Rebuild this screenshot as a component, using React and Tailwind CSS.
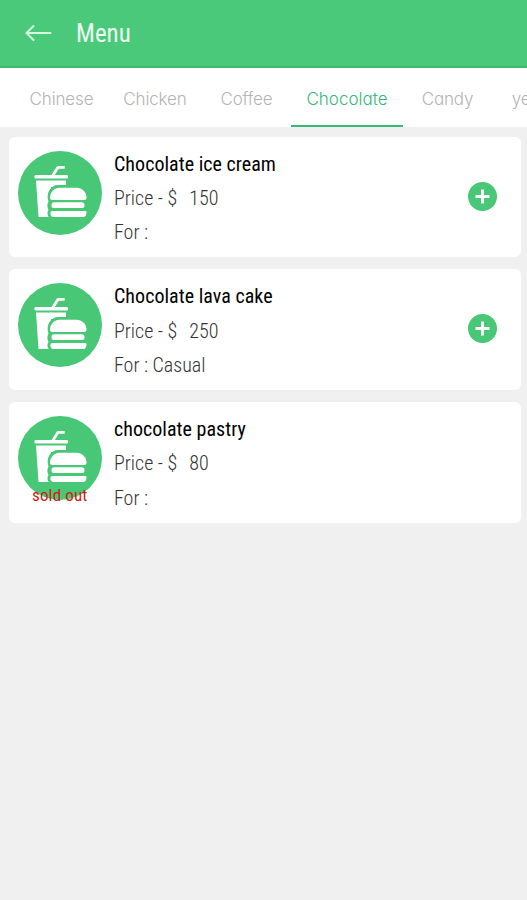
import React from 'react';
import clsx from 'clsx';

const tabs = [
  { name: 'Chinese', width: 'w-[93px]' },
  { name: 'Chicken', width: 'w-[94px]' },
  { name: 'Coffee', width: 'w-[89px]' },
  { name: 'Chocolate', width: 'w-[112px]', active: true },
  { name: 'Candy', width: 'w-[89px]' },
  { name: 'ye', width: 'w-[58px]' },
];

const items = [
  { name: 'Chocolate ice cream', price: 150, category: '' },
  { name: 'Chocolate lava cake', price: 250, category: 'Casual' },
  { name: 'chocolate pastry', price: 80, category: '', soldOut: true },
];

const BackArrow = () => (
  <svg width="28" height="20" viewBox="0 0 28 20" fill="none" stroke="#d6fae0" strokeWidth="2">
    <path d="M26.5 10H2.5M9.5 3L2.5 10L9.5 17" strokeLinecap="round" strokeLinejoin="round" />
  </svg>
);

const FoodIcon = () => (
  <svg width="84" height="84" viewBox="0 0 84 84">
    <circle cx="42" cy="42" r="42" fill="#48c776" />
    <path d="M34.5 25L40 16.3H46.7" fill="none" stroke="#fff" strokeWidth="2.8" strokeLinejoin="round" />
    <rect x="16.5" y="24" width="33.5" height="3.4" rx="1.2" fill="#fff" />
    <path d="M18 29.5H48V36H33V66H20.5Z" fill="#fff" />
    <path
      d="M40 34H60C67 34 71 41 71 47V66.5H31C29 64 29 61 30.5 59C29 56 29 53 30.5 50.5C27.5 42 33 34 40 34Z"
      fill="#48c776"
    />
    <path
      d="M41.5 36.7H58.5C65 36.7 68.5 42 68.5 46.5Q68.5 49 66 49H34.5Q32 49 32 46.5C32 42 35.5 36.7 41.5 36.7Z"
      fill="#fff"
    />
    <rect x="33.5" y="51.3" width="33" height="5.8" rx="2.7" fill="#fff" />
    <path d="M34 60H67.5Q69 60 68.5 62L68 64Q67.5 66 65.5 66H35.5Q33 66 32.5 63.5Q32 60 34 60Z" fill="#fff" />
  </svg>
);

const AddButton = () => (
  <button type="button" className="mt-[45px] mr-6 h-[29px] w-[29px]" aria-label="Add">
    <svg width="29" height="29" viewBox="0 0 29 29">
      <circle cx="14.5" cy="14.5" r="14.5" fill="#48c776" />
      <path d="M14.5 7.5V21.5M7.5 14.5H21.5" stroke="#fff" strokeWidth="3" />
    </svg>
  </button>
);

const MenuCard = ({ item }) => (
  <div className="flex h-[120.5px] items-start rounded-md bg-white pl-[9px]">
    <div className="relative mt-3.5 h-[84px] w-[84px] shrink-0">
      <FoodIcon />
      {item.soldOut && (
        <span className="absolute top-[69px] left-[14px] text-[17px] leading-5 tracking-[0.15px] whitespace-nowrap text-[#d01c14]">
          sold out
        </span>
      )}
    </div>
    <div className="mt-[10px] ml-3 flex-1 text-xl leading-[34.2px] font-light whitespace-pre text-[#333]">
      <h2 className="font-normal tracking-[0.03px] text-black">{item.name}</h2>
      <p>
        Price - $<span className="ml-3">{item.price}</span>
      </p>
      <p>{`For : ${item.category}`}</p>
    </div>
    {!item.soldOut && <AddButton />}
  </div>
);

const App = () => {
  return (
    <div className="h-screen w-full overflow-hidden bg-[#f0f0f0] font-['Roboto_Condensed','Roboto',sans-serif] [font-stretch:75%]">
      <header className="flex h-[68px] items-center border-b-2 border-[#3dbd6e] bg-[#4bc97b] pl-6">
        <BackArrow />
        <h1 className="mt-0.5 ml-6 text-[25px] text-[#ecfff0]">Menu</h1>
      </header>
      <nav className="flex h-[59px] overflow-hidden bg-white pl-[15px] font-['Inter',sans-serif] text-[17px] font-light tracking-[-0.15px] [font-stretch:100%] [font-feature-settings:'cv11']">
        {tabs.map((tab) => (
          <div
            key={tab.name}
            className={clsx(
              'flex h-[59px] shrink-0 items-center justify-center border-b-2 pt-1.5',
              tab.width,
              tab.active
                ? 'border-[#35b878] font-[350] tracking-[0px] text-[#35b878]'
                : 'border-transparent text-[#b4b4b4]'
            )}>
            {tab.name}
          </div>
        ))}
      </nav>
      <main className="flex flex-col gap-[12.3px] pt-[9.6px] pr-1.5 pl-[9px]">
        {items.map((item) => (
          <MenuCard key={item.name} item={item} />
        ))}
      </main>
    </div>
  );
};

export default App;
